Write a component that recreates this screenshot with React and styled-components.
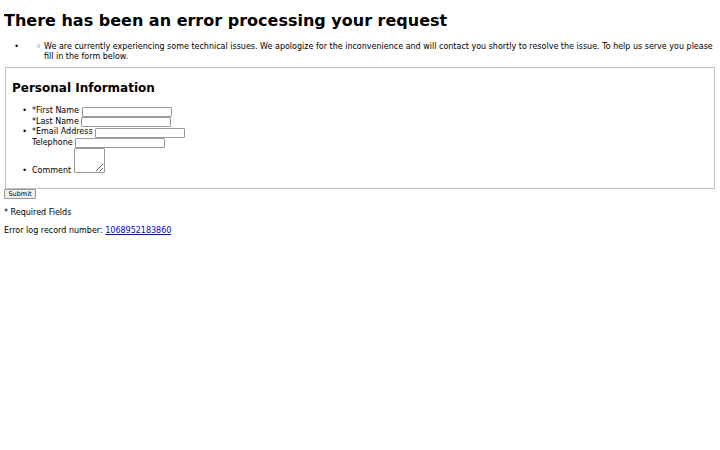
import React from 'react'
import styled, { createGlobalStyle } from 'styled-components'

const Global = createGlobalStyle`
  body {
    margin: 4px;
    font-family: "DejaVu Sans", sans-serif;
    font-size: 8px;
    color: #000;
    background: #fff;
  }
`

function App() {
  return (
    <>
      <Global />
      <Title>There has been an error processing your request</Title>
      <OuterList>
        <li>
          <InnerList>
            <li>
              We are currently experiencing some technical issues. We apologize for the inconvenience and will
              contact you shortly to resolve the issue. To help us serve you please fill in the form below.
            </li>
          </InnerList>
        </li>
      </OuterList>
      <form>
        <Fieldset>
          <Heading>Personal Information</Heading>
          <FieldList>
            <li>
              <label>*First Name </label>
              <Field type="text" />
              <br />
              <label>*Last Name </label>
              <Field type="text" />
            </li>
            <li>
              <label>*Email Address </label>
              <Field type="text" />
              <br />
              <label>Telephone </label>
              <Field type="text" />
            </li>
            <CommentRow>
              <label>Comment </label>
              <Comment />
            </CommentRow>
          </FieldList>
        </Fieldset>
        <Submit type="button">Submit</Submit>
      </form>
      <Note>* Required Fields</Note>
      <Note>
        Error log record number: <Link href="#">1068952183860</Link>
      </Note>
    </>
  )
}

export default App

const Title = styled.h1`
  font-size: 16px;
  font-weight: bold;
  margin: 7px 0 10px;
`

const OuterList = styled.ul`
  margin: 12px 0 5px;
  padding-left: 20px;

  & > li::marker {
    content: "\\2022\\00a0\\00a0";
  }
`

const InnerList = styled.ul`
  margin: 0;
  padding-left: 20px;
  line-height: 10px;

  & > li::marker {
    content: "\\25E6\\00a0";
    font-weight: bold;
  }
`

const Fieldset = styled.fieldset`
  margin: 0 1px;
  padding: 3px 6px 5px;
  border: 1px solid #c0c0c0;
`

const Heading = styled.h2`
  font-size: 12px;
  margin: 10px 0 11px;
`

const FieldList = styled.ul`
  margin: 8px 0 8px;
  padding-left: 20px;
  line-height: 10.5px;

  & > li::marker {
    content: "\\2022\\00a0\\00a0";
  }
`

const CommentRow = styled.li`
  line-height: 9px;
`

const Field = styled.input`
  box-sizing: border-box;
  width: 90px;
  height: 10px;
  padding: 0 1px;
  border: 1px solid #999;
  border-radius: 1px;
  font-size: 7px;
  vertical-align: bottom;
`

const Comment = styled.textarea`
  box-sizing: border-box;
  width: 31px;
  height: 25px;
  padding: 1px;
  margin: 0;
  border: 1px solid #999;
  border-radius: 1px;
  vertical-align: baseline;
`

const Submit = styled.button`
  display: block;
  box-sizing: border-box;
  width: 32px;
  height: 10px;
  font-family: "DejaVu Sans", sans-serif;
  font-size: 6.5px;
  line-height: 8px;
  padding: 0;
  border: 1px solid #999;
  border-radius: 1px;
  background: #efefef;
  color: #000;
`

const Note = styled.p`
  margin: 9px 0 8px;
`

const Link = styled.a`
  color: #0000ee;
`
